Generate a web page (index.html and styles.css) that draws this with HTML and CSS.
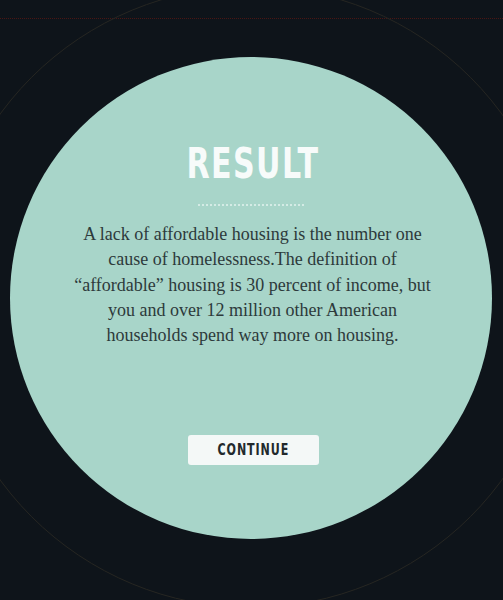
FILE: index.html
```html
<!DOCTYPE html>
<html>
<head>
<meta charset="utf-8">
<link rel="stylesheet" href="styles.css">
</head>
<body>
<div class="stage">
  <div class="ring"></div>
  <div class="topline"></div>
  <div class="result">
    <h1 class="title"><span class="narrow">RESULT</span></h1>
    <div class="divider"></div>
    <p class="copy">A lack of affordable housing is the number one cause of homelessness.The definition of “affordable” housing is 30 percent of income, but you and over 12 million other American households spend way more on housing.</p>
    <button class="continue"><span class="narrow">CONTINUE</span></button>
  </div>
</div>
</body>
</html>
```
FILE: styles.css
```css
html, body {
  margin: 0;
  padding: 0;
  height: 100%;
}
body {
  background: #0e141a;
  overflow: hidden;
}
.stage {
  position: relative;
  width: 503px;
  height: 600px;
  overflow: hidden;
  padding-top: 18px;
  box-sizing: border-box;
}
.ring {
  position: absolute;
  left: -60px;
  top: -14px;
  width: 622px;
  height: 622px;
  border-radius: 50%;
  border: 1px solid #262622;
  box-sizing: border-box;
}
.topline {
  height: 0;
  border-top: 1px dotted #4a1614;
}
.result {
  position: relative;
  margin: 38px 0 0 10px;
  width: 482px;
  height: 482px;
  border-radius: 50%;
  background: #a8d5c9;
  display: flex;
  flex-direction: column;
  align-items: center;
  box-sizing: border-box;
  padding-top: 82px;
}
.narrow {
  display: inline-block;
}
.title {
  margin: 0 0 0 3px;
  font-family: "DejaVu Sans", sans-serif;
  font-weight: bold;
  font-size: 43px;
  line-height: 48px;
  letter-spacing: 2px;
  color: #f7fbfa;
}
.title .narrow {
  transform: scaleX(0.7);
}
.divider {
  width: 106px;
  margin-top: 17px;
  border-top: 2px dotted #d4ebe5;
}
.copy {
  margin: 16px 0 0 3px;
  width: 370px;
  font-family: "Liberation Serif", serif;
  font-size: 18px;
  line-height: 25.3px;
  color: #2d3a3b;
  text-align: center;
}
.continue {
  margin: 87px 0 0 4px;
  width: 131px;
  height: 30px;
  border: none;
  border-radius: 3px;
  background: #f4f8f7;
  font-family: "DejaVu Sans", sans-serif;
  font-weight: bold;
  font-size: 15px;
  letter-spacing: 1.2px;
  color: #22292c;
  padding: 0;
}
.continue .narrow {
  transform: scaleX(0.74);
}
```
